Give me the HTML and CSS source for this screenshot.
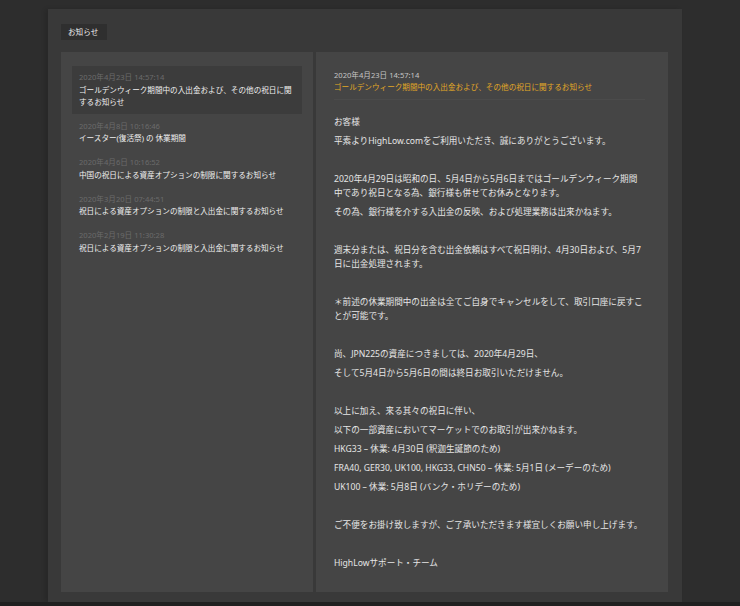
FILE: index.html
```html
<!DOCTYPE html>
<html lang="ja">
<head>
<meta charset="utf-8">
<title>お知らせ</title>
<link rel="stylesheet" href="styles.css">
</head>
<body>
<div class="page">
  <section class="panel">
    <div class="tabs"><span class="tab">お知らせ</span></div>
    <div class="cards">
      <ul class="list">
        <li class="item active">
          <div class="date">2020年4月23日 14:57:14</div>
          <div class="title">ゴールデンウィーク期間中の入出金および、その他の祝日に関するお知らせ</div>
        </li>
        <li class="item">
          <div class="date">2020年4月8日 10:16:46</div>
          <div class="title">イースター(復活祭) の 休業期間</div>
        </li>
        <li class="item">
          <div class="date">2020年4月6日 10:16:52</div>
          <div class="title">中国の祝日による資産オプションの制限に関するお知らせ</div>
        </li>
        <li class="item">
          <div class="date">2020年3月20日 07:44:51</div>
          <div class="title">祝日による資産オプションの制限と入出金に関するお知らせ</div>
        </li>
        <li class="item">
          <div class="date">2020年2月19日 11:30:28</div>
          <div class="title">祝日による資産オプションの制限と入出金に関するお知らせ</div>
        </li>
      </ul>
      <article class="detail">
        <header class="detail-head">
          <div class="detail-date">2020年4月23日 14:57:14</div>
          <h1 class="detail-title">ゴールデンウィーク期間中の入出金および、その他の祝日に関するお知らせ</h1>
        </header>
        <div class="detail-body">
          <p>お客様</p>
          <p>平素よりHighLow.comをご利用いただき、誠にありがとうございます。</p>
          <p>&nbsp;</p>
          <p>2020年4月29日は昭和の日、5月4日から5月6日まではゴールデンウィーク期間中であり祝日となる為、銀行様も併せてお休みとなります。</p>
          <p>その為、銀行様を介する入出金の反映、および処理業務は出来かねます。</p>
          <p>&nbsp;</p>
          <p>週末分または、祝日分を含む出金依頼はすべて祝日明け、4月30日および、5月7日に出金処理されます。</p>
          <p>&nbsp;</p>
          <p>＊前述の休業期間中の出金は全てご自身でキャンセルをして、取引口座に戻すことが可能です。</p>
          <p>&nbsp;</p>
          <p>尚、JPN225の資産につきましては、2020年4月29日、</p>
          <p>そして5月4日から5月6日の間は終日お取引いただけません。</p>
          <p>&nbsp;</p>
          <p>以上に加え、来る其々の祝日に伴い、</p>
          <p>以下の一部資産においてマーケットでのお取引が出来かねます。</p>
          <p>HKG33 – 休業: 4月30日 (釈迦生誕節のため)</p>
          <p>FRA40, GER30, UK100, HKG33, CHN50 – 休業: 5月1日 (メーデーのため)</p>
          <p>UK100 – 休業: 5月8日 (バンク・ホリデーのため)</p>
          <p>&nbsp;</p>
          <p>ご不便をお掛け致しますが、ご了承いただきます様宜しくお願い申し上げます。</p>
          <p>&nbsp;</p>
          <p>HighLowサポート・チーム</p>
        </div>
      </article>
    </div>
  </section>
</div>
<div class="footer-strip"></div>
</body>
</html>
```

FILE: styles.css
```css
html, body {
  margin: 0;
  padding: 0;
  background: #2d2d2d;
  font-family: "Noto Sans", "Noto Sans CJK JP", sans-serif;
  color: #e4e4e4;
}

.page {
  padding: 9px 0 0 48px;
  height: 593px;
}

.panel {
  box-sizing: border-box;
  width: 634px;
  height: 593px;
  background: #393939;
  padding: 15px 14px 10px 13px;
  display: flex;
  flex-direction: column;
  box-shadow: -3px 0 4px rgba(0, 0, 0, 0.12);
}

.tabs {
  display: flex;
  height: 16px;
  margin-bottom: 12px;
}

.tab {
  background: #2f2f2f;
  color: #f0f0f0;
  font-size: 7.6px;
  line-height: 16px;
  padding: 0 9px 0 7px;
}

.cards {
  flex: 1;
  display: flex;
  gap: 3px;
}

.list {
  list-style: none;
  margin: 0;
  box-sizing: border-box;
  width: 252px;
  background: #454545;
  padding: 14px 11px;
}

.item {
  padding: 5px 7px 6px;
  margin-bottom: 1px;
}

.item.active {
  background: #3c3c3c;
}

.date {
  font-size: 7.6px;
  line-height: 12.5px;
  color: #6b6b6b;
}

.title {
  font-size: 7.6px;
  line-height: 12px;
  color: #f0f0f0;
}

.detail {
  box-sizing: border-box;
  width: 352px;
  background: #454545;
  padding: 17px 23px 0 18px;
}

.detail-head {
  padding-bottom: 6px;
  border-bottom: 1px solid #4b4b4b;
}

.detail-date {
  font-size: 7.6px;
  line-height: 12px;
  color: #c4c4c4;
}

.detail-title {
  margin: 0;
  font-size: 7.6px;
  line-height: 12px;
  font-weight: normal;
  color: #e2a826;
}

.detail-body {
  padding-top: 15px;
}

.detail-body p {
  margin: 0 0 5px;
  font-size: 8.6px;
  line-height: 14px;
  color: #e6e6e6;
}

.footer-strip {
  height: 4px;
  background: #202020;
}
```
